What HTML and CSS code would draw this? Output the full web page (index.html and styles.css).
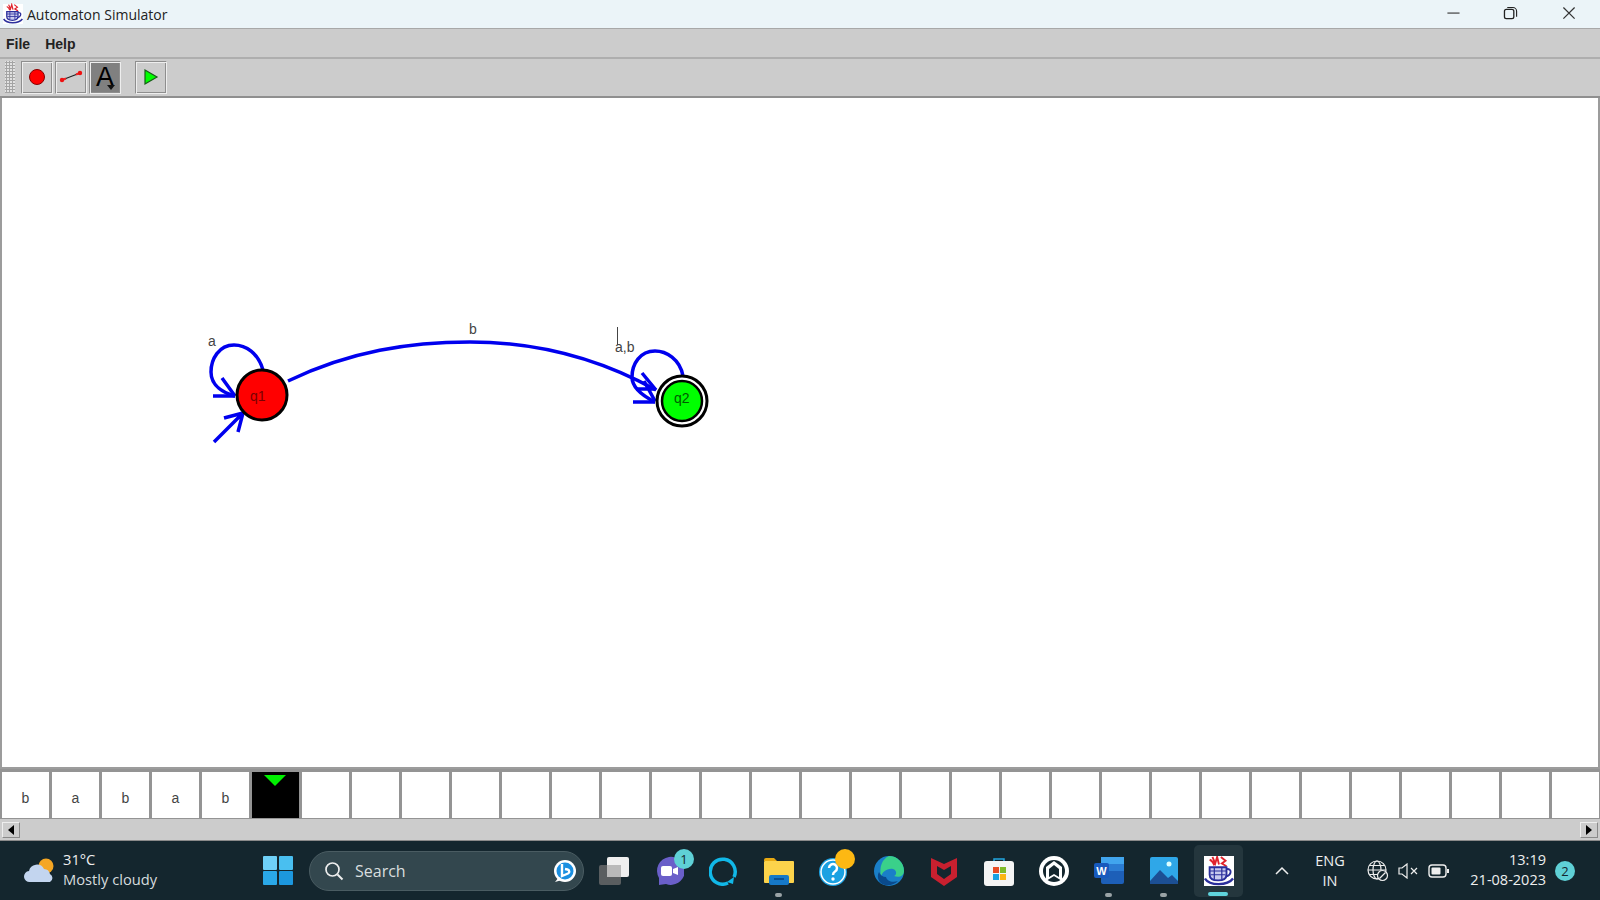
FILE: index.html
```html
<!DOCTYPE html>
<html lang="en">
<head>
    <meta charset="UTF-8">
    <title>Automaton Simulator</title>
    <link rel="stylesheet" href="styles.css">
</head>
<body>

<svg class="defs" width="0" height="0">
    <symbol id="java-cup" viewBox="0 0 32 32">
        <rect width="32" height="32" fill="#fff"/>
        <path d="M9 1l3 7 2-7 2 8M18 1l5 4-4 3 5 3M6 4c3 1 4 3 5 6" fill="none" stroke="#e0222c" stroke-width="2"/>
        <path d="M6 12h18v8c0 4-4 6-9 6s-9-2-9-6z" fill="#c9cbee" stroke="#2b2f9c" stroke-width="2"/>
        <path d="M6 16h18M7 20h16M11 12v13M19 12v13" stroke="#2b2f9c" stroke-width="1.300"/>
        <path d="M24 14c6-1 6 6-1 8" fill="none" stroke="#2b2f9c" stroke-width="2"/>
        <path d="M1 24c5 8 24 8 30 0" fill="none" stroke="#2b2f9c" stroke-width="2.500"/>
    </symbol>
</svg>

<div class="window">
    <header class="titlebar">
        <svg class="title-icon"><use href="#java-cup"/></svg>
        <span class="title-text">Automaton Simulator</span>
        <div class="win-controls">
            <svg class="win-btn" viewBox="0 0 58 30"><path d="M23 14h13" stroke="#333" fill="none" stroke-width="1.200"/></svg>
            <svg class="win-btn" viewBox="0 0 58 30"><rect x="22" y="10" width="10" height="10" rx="2" fill="none" stroke="#222" stroke-width="1.400"/><path d="M25 8h6a4 4 0 0 1 4 4v6" fill="none" stroke="#222" stroke-width="1.200"/></svg>
            <svg class="win-btn" viewBox="0 0 58 30"><path d="M23 8l12 12M35 8L23 20" stroke="#333" fill="none" stroke-width="1.300"/></svg>
        </div>
    </header>

    <nav class="menubar">
        <span class="menu-item">File</span>
        <span class="menu-item">Help</span>
    </nav>

    <div class="toolbar">
        <div class="grip"></div>
        <button class="tool-btn">
            <svg width="20" height="20" viewBox="0 0 20 20"><circle cx="10" cy="10" r="7.500" fill="#f00" stroke="#800" stroke-width="1"/></svg>
        </button>
        <button class="tool-btn">
            <svg width="26" height="20" viewBox="0 0 26 20"><path d="M4 13L22 6" stroke="#222" stroke-width="1.200"/><path d="M4 13l4-1.500M22 6l-4 1.500" stroke="#e22" stroke-width="2"/><circle cx="4" cy="13" r="2.200" fill="#e11"/><circle cx="22" cy="6" r="2.200" fill="#e11"/></svg>
        </button>
        <button class="tool-btn is-active">
            <span class="tool-letter">A</span>
            <svg class="tool-caret" width="8" height="5" viewBox="0 0 8 5"><path d="M0 0h8L4 5z" fill="#111"/></svg>
        </button>
        <button class="tool-btn play-btn">
            <svg width="18" height="20" viewBox="0 0 18 20"><path d="M3 3l12 7-12 7z" fill="#0f0" stroke="#185c18" stroke-width="1.200"/></svg>
        </button>
    </div>

    <main class="canvas">
        <svg class="diagram" width="1596" height="669" viewBox="2 97 1596 669">
            <g fill="none" stroke="#0000ee" stroke-width="3.500">
                <path d="M288 380C350 350 410 341 470 341C540 341 600 358 656 389"/>
                <path d="M263 369C258 352 246 344 234 344C219 344 211 358 211 371C211 385 224 392 235 395"/>
                <path d="M213 395H235M222 377L235 395"/>
                <path d="M214 441L243 412M224 417L243 412L238 431"/>
                <path d="M683 375C680 358 666 350 655 350C640 350 632 363 632 376C632 388 645 396 655 401"/>
                <path d="M633 401H655M642 372L656 389M636 388H656M644 380L655 400"/>
            </g>
            <circle cx="262" cy="394" r="25" fill="#f00" stroke="#000" stroke-width="3"/>
            <circle cx="682" cy="400" r="25" fill="#fff" stroke="#000" stroke-width="3"/>
            <circle cx="682" cy="400" r="20" fill="#0f0" stroke="#000" stroke-width="2.500"/>
            <path d="M617.500 326V344" stroke="#444" stroke-width="1"/>
            <text class="edge-label" x="208" y="345">a</text>
            <text class="edge-label" x="469" y="333">b</text>
            <text class="edge-label" x="615" y="351">a,b</text>
            <text class="state-label state-red" x="250" y="400">q1</text>
            <text class="state-label state-green" x="674" y="402">q2</text>
        </svg>
    </main>

    <div class="tape">
        <div class="cell">b</div>
        <div class="cell">a</div>
        <div class="cell">b</div>
        <div class="cell">a</div>
        <div class="cell">b</div>
        <div class="cell head"><span class="head-mark"></span></div>
        <div class="cell"></div><div class="cell"></div><div class="cell"></div><div class="cell"></div>
        <div class="cell"></div><div class="cell"></div><div class="cell"></div><div class="cell"></div>
        <div class="cell"></div><div class="cell"></div><div class="cell"></div><div class="cell"></div>
        <div class="cell"></div><div class="cell"></div><div class="cell"></div><div class="cell"></div>
        <div class="cell"></div><div class="cell"></div><div class="cell"></div><div class="cell"></div>
        <div class="cell"></div><div class="cell"></div><div class="cell"></div><div class="cell"></div>
        <div class="cell"></div><div class="cell"></div>
    </div>

    <div class="scrollbar">
        <div class="scroll-btn"><span class="arrow-left"></span></div>
        <div class="scroll-track"></div>
        <div class="scroll-btn"><span class="arrow-right"></span></div>
    </div>
</div>

<footer class="taskbar">
    <div class="weather">
        <svg width="34" height="28" viewBox="0 0 34 28">
            <circle cx="23" cy="9" r="7.500" fill="#f5a623"/>
            <path d="M7 25a5.500 5.500 0 0 1-1-11 8 8 0 0 1 15-2 6.500 6.500 0 0 1 6 5 4.500 4.500 0 0 1 0 8z" fill="#c3d5ef"/>
        </svg>
        <div class="weather-text">
            <div class="temp">31°C</div>
            <div class="cond">Mostly cloudy</div>
        </div>
    </div>

    <div class="slot">
        <svg width="30" height="29" viewBox="0 0 30 29">
            <rect width="14" height="14" rx="1" fill="#6fd0f7"/><rect x="16" width="14" height="14" rx="1" fill="#49bff0"/>
            <rect y="15" width="14" height="14" rx="1" fill="#2aa8e8"/><rect x="16" y="15" width="14" height="14" rx="1" fill="#1c97de"/>
        </svg>
    </div>

    <div class="search">
        <svg width="22" height="22" viewBox="0 0 22 22"><circle cx="9.500" cy="9.500" r="6.500" fill="none" stroke="#eee" stroke-width="1.700"/><path d="M14.500 14.500l5 5" stroke="#eee" stroke-width="2"/></svg>
        <span class="search-text">Search</span>
        <svg class="bing" width="24" height="24" viewBox="0 0 24 24"><circle cx="12" cy="12" r="11" fill="#fff"/><circle cx="12" cy="12" r="8.500" fill="#1b8fe0"/><path d="M9 5v12l6-2.500c2-1 1.500-3.500-.5-4L12 10" fill="none" stroke="#fff" stroke-width="2.400"/><path d="M2 23l4-5 3 3z" fill="#fff"/></svg>
    </div>

    <div class="apps">
        <div class="slot">
            <svg width="30" height="28" viewBox="0 0 30 28"><rect x="0" y="8" width="22" height="20" rx="2" fill="#5a5e60"/><rect x="8" y="0" width="22" height="20" rx="2" fill="#efefef"/><rect x="8" y="8" width="14" height="12" fill="#b9b9b9"/></svg>
        </div>
        <div class="slot">
            <svg width="30" height="30" viewBox="0 0 30 30"><path d="M15 2a14 14 0 1 1-3 27l-7 1v-7A14 14 0 0 1 15 2z" transform="translate(0 -1)" fill="#6a5fc9"/><rect x="7" y="10" width="11" height="10" rx="2" fill="#fff"/><path d="M19 13l5-2v8l-5-2z" fill="#fff"/></svg>
            <span class="badge badge-count">1</span>
        </div>
        <div class="slot">
            <svg width="30" height="30" viewBox="0 0 30 30"><path d="M19 27A12.500 12.500 0 1 1 25 21" fill="none" stroke="#11b8e8" stroke-width="3.500"/><path d="M25 21l-1 7-6-2" fill="#11b8e8"/></svg>
        </div>
        <div class="slot has-dot">
            <svg width="30" height="28" viewBox="0 0 30 28"><path d="M0 3a2 2 0 0 1 2-2h8l3 3h-13z" fill="#e8a912"/><rect y="4" width="30" height="22" rx="1" fill="#fcd34b"/><rect x="5" y="18" width="20" height="10" rx="2" fill="#1679c8"/><rect x="10" y="21" width="10" height="2" fill="#0a4f92"/></svg>
        </div>
        <div class="slot">
            <svg width="30" height="30" viewBox="0 0 30 30"><circle cx="14" cy="16" r="14" fill="#1ba1e2"/><circle cx="14" cy="16" r="12" fill="none" stroke="#fff" stroke-width="1.500"/><path d="M10 12a4 4 0 1 1 6 3.500c-1.500 1-2 1.500-2 3.500" fill="none" stroke="#fff" stroke-width="2.500"/><circle cx="14" cy="23" r="1.700" fill="#fff"/></svg>
            <span class="notify-dot"></span>
        </div>
        <div class="slot">
            <svg width="30" height="30" viewBox="0 0 30 30"><circle cx="15" cy="15" r="15" fill="#1a7fc8"/><path d="M15 0a15 15 0 0 1 15 15c0 5-5 7-10 5 3-1 3-6-1-7-6-1-11 3-12 8C5 11 8 3 15 0z" fill="#3ad08a"/><path d="M12 21c1 4 6 6 12 4-3 3-8 5-13 4-6-1-9-8-6-13 1 3 4 5 7 5z" fill="#0a4a8c"/></svg>
        </div>
        <div class="slot">
            <svg width="28" height="30" viewBox="0 0 28 30"><path d="M1 2l13 6 13-6v19l-13 9-13-9z" fill="#c8202f"/><path d="M7 10l7 4 7-4v8l-7 5-7-5z" fill="#14262e"/></svg>
        </div>
        <div class="slot">
            <svg width="30" height="30" viewBox="0 0 30 30"><path d="M10 6V3h10v3" fill="none" stroke="#22a6e0" stroke-width="1.500"/><rect y="5" width="30" height="25" rx="3" fill="#f4f4f4"/><rect x="9" y="11" width="6" height="6" fill="#e84b23"/><rect x="16" y="11" width="6" height="6" fill="#7fba2a"/><rect x="9" y="18" width="6" height="6" fill="#1ba1e2"/><rect x="16" y="18" width="6" height="6" fill="#fbb514"/></svg>
        </div>
        <div class="slot">
            <svg width="30" height="30" viewBox="0 0 30 30"><circle cx="15" cy="15" r="15" fill="#fff"/><circle cx="15" cy="15" r="11" fill="#14262e"/><path d="M15 5l8 6v14l-8-5-8 5V11z" fill="#fff"/><path d="M15 9l5 4v8l-5-3-5 3v-8z" fill="#14262e"/></svg>
        </div>
        <div class="slot has-dot">
            <svg width="30" height="27" viewBox="0 0 30 27"><rect x="7" width="23" height="27" rx="2" fill="#1d5fb8"/><rect x="7" width="23" height="7" fill="#41a5ee"/><rect x="7" y="7" width="23" height="7" fill="#2b7cd3"/><rect y="6" width="15" height="15" rx="2" fill="#185abd"/><text class="word-w" x="7.500" y="18">W</text></svg>
        </div>
        <div class="slot has-dot">
            <svg width="28" height="27" viewBox="0 0 28 27"><rect width="28" height="27" rx="2" fill="#2fa7e8"/><circle cx="19" cy="7" r="2.500" fill="#dff"/><path d="M0 24l10-11 8 8 4-3 6 6v3H0z" fill="#1c4f94"/></svg>
        </div>
        <div class="slot is-open">
            <svg class="java-icon"><use href="#java-cup"/></svg>
            <span class="open-bar"></span>
        </div>
    </div>

    <div class="tray">
        <svg class="chevron" width="16" height="10" viewBox="0 0 16 10"><path d="M2 8l6-6 6 6" fill="none" stroke="#eee" stroke-width="1.500"/></svg>
        <div class="lang">ENG<br>IN</div>
        <div class="tray-icons">
            <svg width="22" height="22" viewBox="0 0 22 22"><g fill="none" stroke="#eee" stroke-width="1.200"><circle cx="10" cy="10" r="9"/><ellipse cx="10" cy="10" rx="4" ry="9"/><path d="M1 10h18M2.500 5.500h15M2.500 14.500h15"/></g><circle cx="15.500" cy="15.500" r="5" fill="#14262e" stroke="#eee" stroke-width="1.200"/><path d="M12.500 18.500l6-6" stroke="#eee" stroke-width="1.200"/></svg>
            <svg width="21" height="16" viewBox="0 0 21 16"><path d="M1 5h3l5-4v14l-5-4H1z" fill="none" stroke="#eee" stroke-width="1.200"/><path d="M13 5l6 6M19 5l-6 6" stroke="#eee" stroke-width="1.200"/></svg>
            <svg width="22" height="14" viewBox="0 0 22 14"><rect x="1" y="1" width="17" height="12" rx="3" fill="none" stroke="#eee" stroke-width="1.400"/><rect x="3.500" y="3.500" width="9" height="7" rx="1" fill="#eee"/><rect x="19" y="5" width="2" height="4" fill="#eee"/></svg>
        </div>
        <div class="clock">
            <div>13:19</div>
            <div>21-08-2023</div>
        </div>
        <span class="badge badge-notify">2</span>
    </div>
</footer>

</body>
</html>
```

FILE: styles.css
```css
:root {
    --panel-color: #cccccc;
    --line-color: #9c9c9c;
    --taskbar-color: #14262e;
    --ui-font: "Open Sans", "Noto Sans", Arial, sans-serif;
    --java-font: "Liberation Sans", Arial, sans-serif;
}
body {
    margin: 0;
    width: 1600px;
    height: 900px;
    overflow: hidden;
    font-family: var(--ui-font);
    background-color: var(--taskbar-color);
}
.defs {
    position: absolute;
}
.window {
    display: flex;
    flex-direction: column;
    height: 841px;
    background-color: var(--panel-color);
}

/* title bar */
.titlebar {
    display: flex;
    align-items: center;
    flex: 0 0 29px;
    background-color: #ebf4f8;
    border-bottom: 1px solid #a8a8a8;
    box-sizing: border-box;
}
.title-icon {
    width: 20px;
    height: 22px;
    margin-left: 3px;
}
.title-text {
    margin-left: 4px;
    font-size: 14px;
    color: #222;
}
.win-controls {
    display: flex;
    margin-left: auto;
    margin-right: 2px;
}
.win-btn {
    width: 58px;
    height: 28px;
}

/* menu + toolbar */
.menubar {
    display: flex;
    align-items: center;
    flex: 0 0 30px;
    gap: 15px;
    padding: 1px 0 0 6px;
    border-bottom: 2px solid #aeaeae;
    box-sizing: border-box;
}
.menu-item {
    font-family: var(--java-font);
    font-weight: bold;
    font-size: 14px;
    color: #222;
}
.toolbar {
    display: flex;
    align-items: center;
    flex: 0 0 39px;
    gap: 2px;
    padding: 0 0 1px 5px;
    box-sizing: border-box;
    border-bottom: 2px solid #8f8f8f;
}
.grip {
    width: 10px;
    height: 32px;
    margin-right: 4px;
    background-color: #e2e2e2;
    background-image: radial-gradient(#a4a4a4 50%, transparent 55%);
    background-size: 3px 3px;
}
.tool-btn {
    position: relative;
    display: flex;
    align-items: center;
    justify-content: center;
    width: 32px;
    height: 33px;
    padding: 0;
    background-color: var(--panel-color);
    border: 1px solid #8e8e8e;
    border-right-color: #eee;
    border-bottom-color: #eee;
    box-shadow: inset 1px 1px 0 #eee, inset -1px -1px 0 #8e8e8e;
}
.is-active {
    background-color: #808080;
}
.play-btn {
    margin-left: 12px;
}
.tool-letter {
    font-family: var(--java-font);
    font-size: 27px;
    line-height: 27px;
    color: #000;
}
.tool-caret {
    position: absolute;
    right: 5px;
    bottom: 3px;
}

/* canvas */
.canvas {
    flex: 0 0 671px;
    background-color: #fff;
    border-left: 2px solid #9c9c9c;
    border-right: 2px solid #9c9c9c;
    border-bottom: 2px solid #9c9c9c;
    box-sizing: border-box;
}
.diagram {
    display: block;
}
.edge-label {
    font-family: var(--java-font);
    font-size: 14px;
    fill: #444;
}
.state-label {
    font-family: var(--java-font);
    font-size: 14px;
}
.state-red {
    fill: #7a0000;
}
.state-green {
    fill: #005a00;
}

/* tape */
.tape {
    display: flex;
    gap: 3px;
    flex: 0 0 50px;
    padding: 3px 0 1px 2px;
    box-sizing: border-box;
    overflow: hidden;
    background-color: #949494;
}
.cell {
    position: relative;
    display: flex;
    align-items: center;
    justify-content: center;
    flex: 0 0 47px;
    padding-top: 6px;
    box-sizing: border-box;
    background-color: #fff;
    font-family: var(--java-font);
    font-size: 14px;
    color: #444;
}
.head {
    background-color: #000;
}
.head-mark {
    position: absolute;
    top: 3px;
    left: 12px;
    border-left: 11px solid transparent;
    border-right: 11px solid transparent;
    border-top: 11px solid #00f000;
}

/* scrollbar */
.scrollbar {
    display: flex;
    flex: 0 0 22px;
    padding: 3px 2px 2px;
    box-sizing: border-box;
    border-bottom: 1px solid #8a8a8a;
}
.scroll-btn {
    display: flex;
    align-items: center;
    justify-content: center;
    width: 18px;
    background-color: var(--panel-color);
    border: 1px solid #eee;
    border-right-color: #8a8a8a;
    border-bottom-color: #8a8a8a;
    box-sizing: border-box;
}
.scroll-track {
    flex: 1;
}
.arrow-left, .arrow-right {
    border-top: 5px solid transparent;
    border-bottom: 5px solid transparent;
}
.arrow-left {
    border-right: 6px solid #000;
}
.arrow-right {
    border-left: 6px solid #000;
}

/* taskbar */
.taskbar {
    display: flex;
    align-items: center;
    height: 59px;
    color: #eee;
}
.weather {
    display: flex;
    align-items: center;
    width: 250px;
    padding-left: 23px;
    box-sizing: border-box;
    gap: 6px;
}
.weather-text {
    margin-top: -4px;
    font-size: 14.700px;
    line-height: 20px;
}
.cond {
    color: #d6dcde;
}
.slot {
    position: relative;
    display: flex;
    align-items: center;
    justify-content: center;
    width: 55px;
    height: 59px;
}
.search {
    display: flex;
    align-items: center;
    width: 275px;
    height: 40px;
    margin-left: 4px;
    padding: 0 6px 0 13px;
    box-sizing: border-box;
    background-color: #33474e;
    border: 1px solid #4a5c62;
    border-radius: 20px;
    font-size: 16px;
    color: #d8dedf;
}
.search-text {
    margin-left: 10px;
}
.bing {
    margin-left: auto;
}
.apps {
    display: flex;
    margin-left: 2px;
}
.has-dot::after {
    content: "";
    position: absolute;
    bottom: 3px;
    left: 24px;
    width: 7px;
    height: 4px;
    border-radius: 2px;
    background-color: #9aa3a6;
}
.is-open::before {
    content: "";
    position: absolute;
    left: 3px;
    top: 4px;
    bottom: 3px;
    width: 49px;
    border-radius: 5px;
    background-color: #24363d;
}
.java-icon {
    position: relative;
    width: 30px;
    height: 30px;
}
.open-bar {
    position: absolute;
    bottom: 4px;
    left: 17px;
    width: 20px;
    height: 4px;
    border-radius: 2px;
    background-color: #5fd3dc;
}
.badge {
    display: flex;
    align-items: center;
    justify-content: center;
    border-radius: 50%;
    background-color: #5fd0d6;
    color: #14262e;
    font-size: 13px;
}
.badge-count {
    position: absolute;
    top: 8px;
    left: 33px;
    width: 20px;
    height: 20px;
}
.badge-notify {
    width: 20px;
    height: 20px;
    margin-left: 9px;
}
.notify-dot {
    position: absolute;
    top: 8px;
    left: 29px;
    width: 20px;
    height: 20px;
    border-radius: 50%;
    background-color: #fdb813;
}
.word-w {
    font-family: var(--java-font);
    font-weight: bold;
    font-size: 11px;
    text-anchor: middle;
    fill: #fff;
}
.tray {
    display: flex;
    align-items: center;
    margin-left: 28px;
}
.chevron {
    margin-right: 16px;
}
.lang {
    width: 48px;
    text-align: center;
    font-size: 14.500px;
    line-height: 20px;
}
.tray-icons {
    display: flex;
    align-items: center;
    gap: 9px;
    margin-left: 13px;
}
.clock {
    width: 96px;
    margin-top: -2px;
    text-align: right;
    font-size: 14.500px;
    line-height: 20px;
}
```
